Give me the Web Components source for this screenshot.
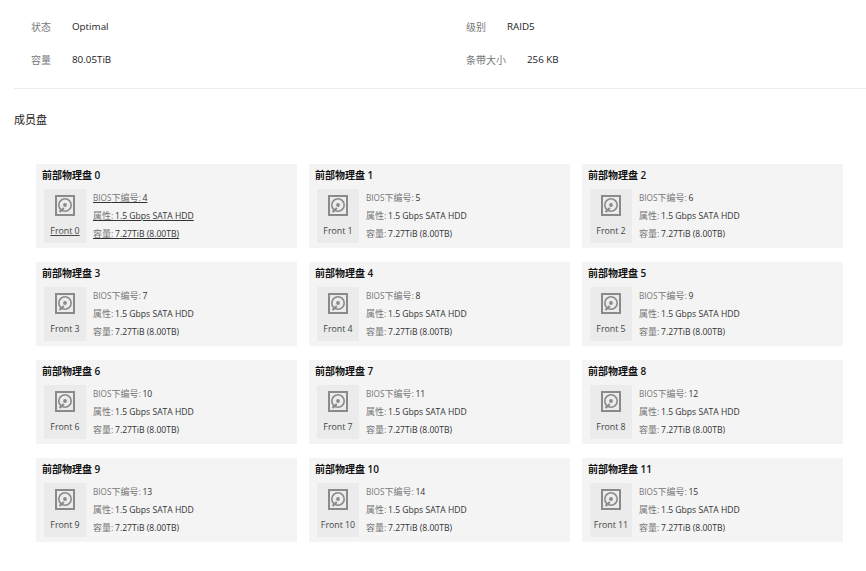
<!DOCTYPE html>
<html>
<head>
<meta charset="utf-8">
<style>
  html, body { margin: 0; padding: 0; background: #fff; }
  body { font-family: "Open Sans", "Noto Sans CJK SC", sans-serif; color: #222; }
</style>
</head>
<body>
<raid-page></raid-page>
<script>
class InfoItem extends HTMLElement {
    constructor() {
        super();
        this.attachShadow({ mode: 'open' });
        this.shadowRoot.innerHTML = `
            <style>
                :host { display: flex; align-items: center; height: 33px; font-size: 10px; gap: 21px; }
                .label { color: #777; }
                .value { color: #222; font-size: 9.8px; }
            </style>
            <span class="label">${this.getAttribute('label')}</span>
            <span class="value"><slot></slot></span>
        `;
    }
}
customElements.define('info-item', InfoItem);

class DiskIcon extends HTMLElement {
    constructor() {
        super();
        this.attachShadow({ mode: 'open' });
        this.shadowRoot.innerHTML = `
            <style>
                :host { display: block; width: 20px; height: 21px; }
                svg { display: block; }
            </style>
            <svg width="20" height="21" viewBox="0 0 20 21" fill="none" stroke="#8a8a8a">
                <rect x="1" y="1" width="18" height="19" stroke-width="2" fill="#ececec"/>
                <circle cx="10" cy="10" r="6.2" stroke-width="1.6"/>
                <circle cx="10" cy="10" r="1.9" fill="#8a8a8a" stroke="none"/>
                <path d="M8.8 13 L4.5 17" stroke-width="2.2"/>
            </svg>
        `;
    }
}
customElements.define('disk-icon', DiskIcon);

class DiskCard extends HTMLElement {
    constructor() {
        super();
        this.attachShadow({ mode: 'open' });
        const idx = this.getAttribute('index');
        this.shadowRoot.innerHTML = `
            <style>
                :host { display: block; height: 84px; background: #f4f4f4; box-sizing: border-box; padding: 4px 6px 5px; font-size: 9px; color: #333; }
                :host(.hovered) .thumb span, :host(.hovered) .line { text-decoration: underline; }
                .title { font-size: 10px; font-weight: 600; color: #111; height: 21px; line-height: 14px; }
                .body { display: flex; gap: 7px; margin-left: 2px; }
                .thumb { width: 42px; height: 54px; background: #ebebeb; border-radius: 1px; display: flex; flex-direction: column; align-items: center; padding-top: 6px; box-sizing: border-box; }
                .thumb span { margin-top: 9px; white-space: nowrap; color: #444; font-size: 8.8px; line-height: 12px; }
                .lines { display: flex; flex-direction: column; }
                .line { height: 18px; line-height: 18px; white-space: nowrap; font-size: 8.6px; }
                .k { color: #777; font-size: 9px; margin-right: -0.6px; }
                .bios { font-size: 8.2px; }
            </style>
            <div class="title">前部物理盘 ${idx}</div>
            <div class="body">
                <div class="thumb"><disk-icon></disk-icon><span>Front ${idx}</span></div>
                <div class="lines">
                    <div class="line"><span class="k"><span class="bios">BIOS</span>下编号:</span> ${this.getAttribute('bios')}</div>
                    <div class="line"><span class="k">属性:</span> 1.5 Gbps SATA HDD</div>
                    <div class="line"><span class="k">容量:</span> 7.27TiB (8.00TB)</div>
                </div>
            </div>
        `;
    }
}
customElements.define('disk-card', DiskCard);

class RaidPage extends HTMLElement {
    constructor() {
        super();
        this.attachShadow({ mode: 'open' });
        let cards = '';
        for (let i = 0; i < 12; i++) {
            cards += `<disk-card index="${i}" bios="${i + 4}"${i === 0 ? ' class="hovered"' : ''}></disk-card>`;
        }
        this.shadowRoot.innerHTML = `
            <style>
                :host { display: block; width: 866px; height: 571px; overflow: hidden; }
                .info { display: grid; grid-template-columns: 435px 1fr; align-content: start; padding: 10px 0 0 17px; height: 89px; box-sizing: border-box; border-bottom: 1px solid #ececec; margin-left: 14px; }
                h3 { margin: 0; font-size: 11px; font-weight: 400; color: #222; padding: 23px 0 0 14px; height: 51px; line-height: 15px; box-sizing: border-box; }
                .grid { display: grid; grid-template-columns: repeat(3, 261px); column-gap: 12px; row-gap: 14px; padding-left: 36px; margin-top: 24px; }
            </style>
            <div class="info">
                <info-item label="状态">Optimal</info-item>
                <info-item label="级别">RAID5</info-item>
                <info-item label="容量">80.05TiB</info-item>
                <info-item label="条带大小">256 KB</info-item>
            </div>
            <h3>成员盘</h3>
            <div class="grid">${cards}</div>
        `;
    }
}
customElements.define('raid-page', RaidPage);
</script>
</body>
</html>
